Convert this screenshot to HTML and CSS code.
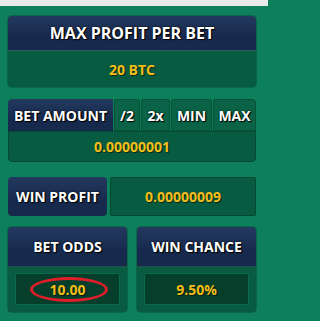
FILE: index.html
```html
<!DOCTYPE html>
<html>
<head>
<meta charset="utf-8">
<link rel="stylesheet" href="styles.css">
</head>
<body>
<div class="topbar"></div>
<div class="main">
  <section class="panel">
    <div class="head head-lg">MAX PROFIT PER BET</div>
    <div class="body body-lg">20 BTC</div>
  </section>

  <section class="panel panel-bet">
    <div class="btn-row">
      <div class="head head-label">BET AMOUNT</div>
      <div class="btn btn-half">/2</div>
      <div class="btn btn-double">2x</div>
      <div class="btn btn-min">MIN</div>
      <div class="btn btn-max">MAX</div>
    </div>
    <div class="body body-sm">0.00000001</div>
  </section>

  <section class="profit-row">
    <div class="head profit-label">WIN PROFIT</div>
    <div class="profit-value">0.00000009</div>
  </section>

  <section class="odds-row">
    <div class="panel odds-panel">
      <div class="head head-odds">BET ODDS</div>
      <div class="odds-body">
        <div class="odds-box">
          <span class="ring"></span>
          <span class="val">10.00</span>
        </div>
      </div>
    </div>
    <div class="panel odds-panel">
      <div class="head head-odds">WIN CHANCE</div>
      <div class="odds-body">
        <div class="odds-box"><span class="val">9.50%</span></div>
      </div>
    </div>
  </section>
</div>
</body>
</html>
```

FILE: styles.css
```css
* { box-sizing: border-box; }
html, body { margin: 0; padding: 0; }
body {
  width: 268px;
  height: 321px;
  overflow: hidden;
  background: #0d7f5b;
  font-family: "Open Sans", "DejaVu Sans", sans-serif;
  font-weight: 700;
}
.topbar {
  height: 6px;
  background: #e9ebea;
}
.main {
  padding: 10px 12px 0 8px;
  display: flex;
  flex-direction: column;
}
.panel {
  border-radius: 4px;
  overflow: hidden;
  background: #075b41;
  box-shadow: 0 0 0 1px rgba(0, 60, 40, 0.35);
}
.head {
  color: #fff;
  background: linear-gradient(#24395f, #172a4e 60%, #162a4c);
  text-shadow: 1px 1px 1px #000, 0 0 2px #000;
  display: flex;
  align-items: center;
  justify-content: center;
  white-space: nowrap;
}
.head-lg {
  height: 35px;
  font-size: 16px;
  border-bottom: 1px solid #2d5a5a;
}
.body {
  color: #f2bd1a;
  text-shadow: 1px 1px 1px #002a18;
  display: flex;
  align-items: center;
  justify-content: center;
  background: #075b41;
}
.body-lg {
  height: 36px;
  font-size: 14px;
}
.panel-bet {
  margin-top: 12px;
  background: transparent;
  box-shadow: none;
}
.btn-row {
  display: flex;
  height: 32px;
  gap: 1px;
}
.head-label {
  width: 105px;
  font-size: 14px;
  border-radius: 4px 0 0 0;
}
.btn {
  background: #0a6346;
  color: #fff;
  font-size: 14px;
  text-shadow: 1px 1px 1px #000, 0 0 2px #000;
  display: flex;
  align-items: center;
  justify-content: center;
  border-radius: 3px 3px 0 0;
  box-shadow: inset 0 0 0 1px rgba(0, 50, 30, 0.35);
}
.btn-half { width: 26px; }
.btn-double { width: 29px; }
.btn-min { width: 41px; }
.btn-max { flex: 1; border-radius: 3px 4px 0 0; }
.body-sm {
  height: 31px;
  font-size: 14px;
  border-radius: 0 0 4px 4px;
  box-shadow: inset 0 0 0 1px rgba(0, 50, 30, 0.35);
}
.profit-row {
  margin-top: 15px;
  display: flex;
  gap: 3px;
  height: 39px;
}
.profit-label {
  width: 99px;
  font-size: 14px;
  border-radius: 4px;
}
.profit-value {
  flex: 1;
  background: #075b41;
  color: #f2bd1a;
  font-size: 14px;
  text-shadow: 1px 1px 1px #002a18;
  display: flex;
  align-items: center;
  justify-content: center;
  border-radius: 2px;
  box-shadow: inset 0 0 0 1px rgba(0, 50, 30, 0.4);
}
.odds-row {
  margin-top: 11px;
  display: flex;
  gap: 10px;
}
.odds-panel {
  flex: 1;
}
.head-odds {
  height: 40px;
  font-size: 14px;
  border-bottom: 1px solid #22504e;
}
.odds-body {
  padding: 6px 7px 7px;
  background: #085b41;
}
.odds-box {
  position: relative;
  height: 32px;
  background: #053f2b;
  border: 1px solid #0a6a4a;
  border-radius: 2px;
  display: flex;
  align-items: center;
  justify-content: center;
  color: #f2bd1a;
  font-size: 14px;
  text-shadow: 1px 1px 1px #001a10;
}
.val { position: relative; }
.ring {
  position: absolute;
  left: 14px;
  top: 3px;
  width: 78px;
  height: 25px;
  border: 3px solid #e01e2a;
  border-radius: 50%;
}
```
